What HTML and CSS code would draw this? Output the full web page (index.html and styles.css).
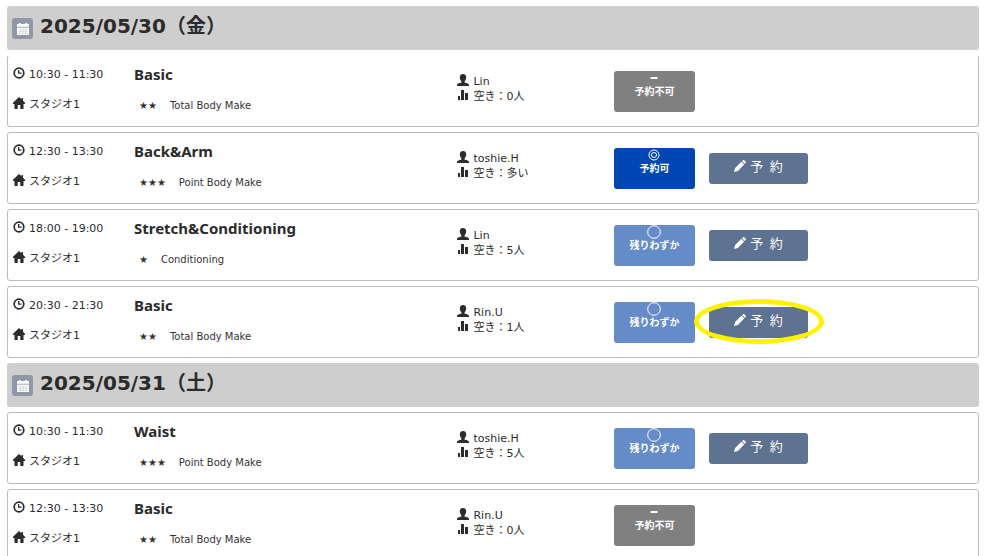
FILE: index.html
```
<!DOCTYPE html>
<html lang="ja">
<head>
    <meta charset="UTF-8">
    <meta name="viewport" content="width=device-width, initial-scale=1.0">
    <title>スケジュール</title>
    <link rel="stylesheet" href="styles.css">
</head>
<body>
    <svg class="sprite" aria-hidden="true">
        <symbol id="i-calendar" viewBox="0 0 13 13">
            <path d="M0 1h2V0h2v1h5V0h2v1h2v3H0z"/>
            <path d="M0 5h13v8H0z"/>
            <path d="M1 7.500h11M1 9.500h11M1 11.500h11M3.500 6v6M6.500 6v6M9.500 6v6" stroke="#9297a8" stroke-width="0.3" fill="none"/>
        </symbol>
        <symbol id="i-time" viewBox="0 0 12 12">
            <circle cx="6" cy="6" r="4.800" fill="none" stroke="currentColor" stroke-width="1.700"/>
            <path d="M5 3h1.300v2.500H8.500v1.300H5z"/>
        </symbol>
        <symbol id="i-home" viewBox="0 0 12 12">
            <path d="M6 0l2.500 2.300V1H10v2.800l2 2V7h-1.500v5H7.300V8H4.700v4H1.500V7H0V5.800z"/>
        </symbol>
        <symbol id="i-user" viewBox="0 0 12 12">
            <path d="M6 0c2.200 0 3.200 1.300 3.200 3.300 0 1.700-.7 3-1.600 3.900v1.300c1.500.5 4.400 1 4.400 2.500v1H0v-1c0-1.500 2.900-2 4.400-2.500V7.200C3.500 6.300 2.800 5 2.800 3.300 2.800 1.300 3.800 0 6 0z"/>
        </symbol>
        <symbol id="i-stats" viewBox="0 0 12 12">
            <path d="M1 7h2v4H1zM4 1h3v10H4zM8 4h3v7H8z"/>
        </symbol>
        <symbol id="i-pencil" viewBox="0 0 13 13">
            <path d="M0 13l1.200-4.200L8 2l3 3-6.800 6.800zM8.700 1.300L9.700.4c.5-.5 1-.5 1.500 0l1.400 1.400c.5.500.5 1 0 1.500l-.9 1z"/>
        </symbol>
    </svg>

    <main class="schedule">
        <h2 class="date"><span class="date-icon"><svg class="icon"><use href="#i-calendar"/></svg></span>2025/05/30（金）</h2>

        <section class="lesson lesson-first">
            <div class="when">
                <p><svg class="icon"><use href="#i-time"/></svg>10:30 - 11:30</p>
                <p><svg class="icon"><use href="#i-home"/></svg>スタジオ1</p>
            </div>
            <div class="what">
                <h3>Basic</h3>
                <p class="level"><span class="stars">★★</span>Total Body Make</p>
            </div>
            <div class="who">
                <p><svg class="icon"><use href="#i-user"/></svg>Lin</p>
                <p><svg class="icon"><use href="#i-stats"/></svg>空き：0人</p>
            </div>
            <div class="actions">
                <div class="status full"><svg class="mark" viewBox="0 0 14 14"><path d="M3.500 7h7" stroke-width="2"/></svg>予約不可</div>
            </div>
        </section>

        <section class="lesson">
            <div class="when">
                <p><svg class="icon"><use href="#i-time"/></svg>12:30 - 13:30</p>
                <p><svg class="icon"><use href="#i-home"/></svg>スタジオ1</p>
            </div>
            <div class="what">
                <h3>Back&amp;Arm</h3>
                <p class="level"><span class="stars">★★★</span>Point Body Make</p>
            </div>
            <div class="who">
                <p><svg class="icon"><use href="#i-user"/></svg>toshie.H</p>
                <p><svg class="icon"><use href="#i-stats"/></svg>空き：多い</p>
            </div>
            <div class="actions">
                <div class="status open"><svg class="mark" viewBox="0 0 14 14"><circle cx="7" cy="7" r="5"/><circle cx="7" cy="7" r="2.500"/></svg>予約可</div>
                <button type="button" class="reserve"><svg class="icon"><use href="#i-pencil"/></svg>予&ensp;約</button>
            </div>
        </section>

        <section class="lesson">
            <div class="when">
                <p><svg class="icon"><use href="#i-time"/></svg>18:00 - 19:00</p>
                <p><svg class="icon"><use href="#i-home"/></svg>スタジオ1</p>
            </div>
            <div class="what">
                <h3>Stretch&amp;Conditioning</h3>
                <p class="level"><span class="stars">★</span>Conditioning</p>
            </div>
            <div class="who">
                <p><svg class="icon"><use href="#i-user"/></svg>Lin</p>
                <p><svg class="icon"><use href="#i-stats"/></svg>空き：5人</p>
            </div>
            <div class="actions">
                <div class="status few"><svg class="mark" viewBox="0 0 14 14"><circle cx="7" cy="7" r="6.300"/></svg>残りわずか</div>
                <button type="button" class="reserve"><svg class="icon"><use href="#i-pencil"/></svg>予&ensp;約</button>
            </div>
        </section>

        <section class="lesson">
            <div class="when">
                <p><svg class="icon"><use href="#i-time"/></svg>20:30 - 21:30</p>
                <p><svg class="icon"><use href="#i-home"/></svg>スタジオ1</p>
            </div>
            <div class="what">
                <h3>Basic</h3>
                <p class="level"><span class="stars">★★</span>Total Body Make</p>
            </div>
            <div class="who">
                <p><svg class="icon"><use href="#i-user"/></svg>Rin.U</p>
                <p><svg class="icon"><use href="#i-stats"/></svg>空き：1人</p>
            </div>
            <div class="actions">
                <div class="status few"><svg class="mark" viewBox="0 0 14 14"><circle cx="7" cy="7" r="6.300"/></svg>残りわずか</div>
                <button type="button" class="reserve highlight"><svg class="icon"><use href="#i-pencil"/></svg>予&ensp;約</button>
            </div>
        </section>

        <h2 class="date"><span class="date-icon"><svg class="icon"><use href="#i-calendar"/></svg></span>2025/05/31（土）</h2>

        <section class="lesson">
            <div class="when">
                <p><svg class="icon"><use href="#i-time"/></svg>10:30 - 11:30</p>
                <p><svg class="icon"><use href="#i-home"/></svg>スタジオ1</p>
            </div>
            <div class="what">
                <h3>Waist</h3>
                <p class="level"><span class="stars">★★★</span>Point Body Make</p>
            </div>
            <div class="who">
                <p><svg class="icon"><use href="#i-user"/></svg>toshie.H</p>
                <p><svg class="icon"><use href="#i-stats"/></svg>空き：5人</p>
            </div>
            <div class="actions">
                <div class="status few"><svg class="mark" viewBox="0 0 14 14"><circle cx="7" cy="7" r="6.300"/></svg>残りわずか</div>
                <button type="button" class="reserve"><svg class="icon"><use href="#i-pencil"/></svg>予&ensp;約</button>
            </div>
        </section>

        <section class="lesson">
            <div class="when">
                <p><svg class="icon"><use href="#i-time"/></svg>12:30 - 13:30</p>
                <p><svg class="icon"><use href="#i-home"/></svg>スタジオ1</p>
            </div>
            <div class="what">
                <h3>Basic</h3>
                <p class="level"><span class="stars">★★</span>Total Body Make</p>
            </div>
            <div class="who">
                <p><svg class="icon"><use href="#i-user"/></svg>Rin.U</p>
                <p><svg class="icon"><use href="#i-stats"/></svg>空き：0人</p>
            </div>
            <div class="actions">
                <div class="status full"><svg class="mark" viewBox="0 0 14 14"><path d="M3.500 7h7" stroke-width="2"/></svg>予約不可</div>
            </div>
        </section>
    </main>
</body>
</html>
```
FILE: styles.css
```
* {
    box-sizing: border-box;
}
html {
    overflow: hidden;
}
body {
    margin: 0;
    padding: 6px 8px 0 7px;
    font-family: "DejaVu Sans", "Noto Sans CJK JP", sans-serif;
    font-size: 11px;
    line-height: 15px;
    color: #2b2b2b;
    background-color: #fff;
}
h2, h3, p {
    margin: 0;
}
.sprite {
    display: none;
}
.icon {
    width: 12px;
    height: 12px;
    flex: none;
    fill: currentColor;
}
.schedule {
    display: flex;
    flex-direction: column;
    gap: 5px;
}
.date {
    display: flex;
    align-items: center;
    gap: 7px;
    padding: 0 5px 4px;
    font-size: 20px;
    line-height: 40px;
    background-color: #cecece;
    border-radius: 3px;
}
.date-icon {
    display: flex;
    align-items: center;
    justify-content: center;
    width: 21px;
    height: 21px;
    margin-top: 5px;
    color: #fff;
    background-color: #9297a8;
    border-radius: 3px;
}
.lesson {
    display: grid;
    grid-template-columns: 12.6% 33.7% 16.3% 1fr;
    align-items: center;
    min-height: 72px;
    padding: 0 5px;
    border: 1px solid #bbb;
    border-radius: 3px;
}
.lesson-first {
    border-top-color: transparent;
}
.when {
    padding-bottom: 2px;
}
.who {
    padding-bottom: 4px;
}
.when p, .who p {
    display: flex;
    align-items: center;
    gap: 4px;
}
.when p, .what h3 {
    line-height: 30px;
}
.when .icon {
    margin-bottom: 4px;
}
.who .icon {
    margin-bottom: 3px;
}
.what h3 {
    font-family: "Noto Sans", sans-serif;
    font-size: 15px;
}
.level {
    display: flex;
    gap: 13px;
    padding-left: 5px;
    font-size: 10px;
    line-height: 34px;
    color: #333;
}
.actions {
    display: flex;
    align-items: center;
    gap: 14px;
}
.status {
    display: flex;
    flex-direction: column;
    align-items: center;
    width: 81px;
    height: 41px;
    font-size: 10px;
    font-weight: bold;
    line-height: 13px;
    color: #fff;
    border-radius: 3px;
}
.mark {
    width: 14px;
    height: 14px;
    fill: none;
    stroke: #fff;
}
.full {
    background-color: #808080;
}
.open {
    background-color: #0047b3;
}
.few {
    background-color: #658cc8;
}
.reserve {
    position: relative;
    display: flex;
    align-items: center;
    justify-content: center;
    gap: 4px;
    width: 99px;
    height: 31px;
    padding: 0 0 4px;
    font: inherit;
    font-size: 13px;
    color: #fff;
    background-color: #5e7292;
    border: none;
    border-radius: 3px;
    cursor: pointer;
}
.reserve:hover {
    background-color: #4c5f7d;
}
.highlight::after {
    content: "";
    position: absolute;
    inset: -8px -16px -6px -15px;
    border: 5px solid #fff200;
    border-radius: 50%;
}
```
